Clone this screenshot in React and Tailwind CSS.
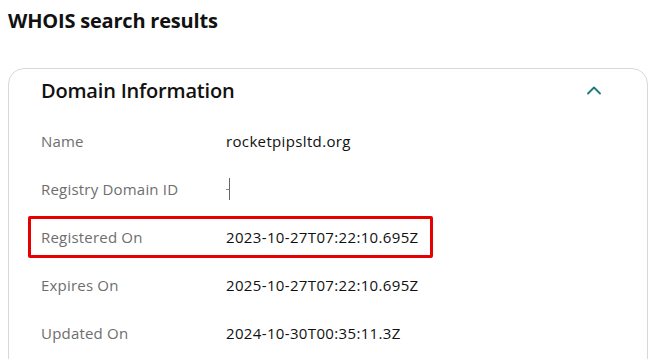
import React from 'react';

const rows = [
  { label: 'Name', value: 'rocketpipsltd.org' },
  { label: 'Registry Domain ID', value: null },
  { label: 'Registered On', value: '2023-10-27T07:22:10.695Z', highlight: true },
  { label: 'Expires On', value: '2025-10-27T07:22:10.695Z' },
  { label: 'Updated On', value: '2024-10-30T00:35:11.3Z' },
];

const App = () => {
  return (
    <div className="w-[654px] h-[359px] overflow-hidden bg-white text-[#111] font-['Open_Sans',sans-serif]">
      <h1 className="pl-2 pt-[7px] text-[20px] leading-[28px] font-bold tracking-[-0.2px]">WHOIS search results</h1>

      <div className="mt-[33px] ml-2 mr-[6px] h-[400px] rounded-[16px] border border-[#d4d9de] pt-[7px]">
        <div className="flex items-center justify-between pl-[32px] pr-[44px] h-[30px]">
          <h2 className="text-[20px] font-semibold tracking-[-0.2px]">Domain Information</h2>
          <svg width="18" height="18" viewBox="0 0 18 18" fill="none" stroke="#1a7a7c" strokeWidth="1.8" strokeLinecap="round" strokeLinejoin="round">
            <path d="M3 11.5 L9 5.5 L15 11.5" />
          </svg>
        </div>

        <div className="mt-[14px] flex flex-col">
          {rows.map((r) => (
            <div
              key={r.label}
              className={`flex items-center h-[42px] mb-[6px] ${
                r.highlight ? 'ml-[19px] w-[405px] border-[3px] border-[#e60000] rounded-[2px] pl-[10px]' : 'ml-[32px] pl-0'
              }`}
            >
              <span className="w-[185px] shrink-0 text-[15px] text-[#6e6e6e] tracking-[0.2px]">{r.label}</span>
              {r.value ? (
                <span className="text-[15px] text-[#111] tracking-[0.35px]">{r.value}</span>
              ) : (
                <span className="relative flex items-center h-[24px]">
                  <span className="w-[3px] h-[1px] bg-[#888]" />
                  <span className="w-[1px] h-[22px] bg-[#666]" />
                </span>
              )}
            </div>
          ))}
        </div>
      </div>
    </div>
  );
};

export default App;
